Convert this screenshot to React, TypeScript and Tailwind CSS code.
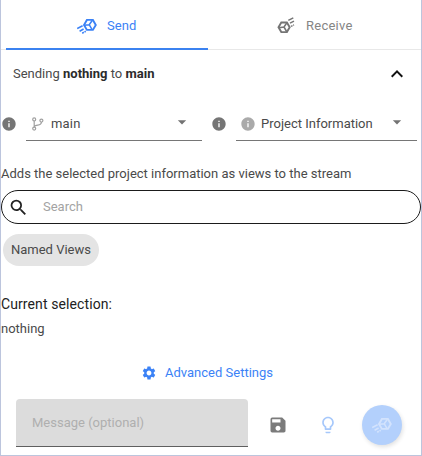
import type { ReactNode } from "react";
import {
  MdArrowDropDown,
  MdInfo,
  MdKeyboardArrowUp,
  MdLightbulbOutline,
  MdSave,
  MdSearch,
  MdSettings,
} from "react-icons/md";

function SendIcon() {
  return (
    <svg width="20" height="18" viewBox="0 0 20 18" fill="none" stroke="currentColor">
      <path d="M9.9 2.9h6l2.9 5-2.9 5h-6L7 7.9z" strokeWidth="1.9" />
      <path d="M7.3 8.2l4.9-.5 3.2-4.4M12.2 7.7l2.9 5" strokeWidth="1.5" />
      <path d="M.2 11.6l5.4-2.9M2.6 14.2l4-2.2" strokeWidth="1.6" />
      <path d="M5.2 16.2l3.6-1.9" strokeWidth="1.6" strokeDasharray="1.9 .7" />
    </svg>
  );
}

function ReceiveIcon() {
  return (
    <svg width="18" height="18" viewBox="0 0 18 18" fill="none" stroke="currentColor">
      <path d="M4.3 5.5h5.6l2.8 4.8-2.8 4.8H4.3l-2.8-4.8z" strokeWidth="1.9" />
      <path d="M1.8 10.8l5.2-.8 2.9-4.2M7 10l2.9 5" strokeWidth="1.5" />
      <path d="M11.3 3.3l5-2.5M13 6.2l4-2" strokeWidth="1.5" />
      <path d="M14 9.4l3-1.5" strokeWidth="1.5" strokeDasharray="1.7 .8" />
    </svg>
  );
}

function BranchIcon() {
  return (
    <svg width="12" height="14" viewBox="0 0 12 14" fill="none" stroke="currentColor" strokeWidth="1.2">
      <circle cx="2.2" cy="2.4" r="1.5" />
      <circle cx="2.2" cy="11.6" r="1.5" />
      <circle cx="9.4" cy="3.6" r="1.5" />
      <path d="M2.2 3.9v6.2M9.4 5.1c0 2.4-1.6 2.8-3.6 3-2.2.2-3.3.6-3.6 1.8" />
    </svg>
  );
}

function Select({ className, icon, label }: { className: string; icon: ReactNode; label: string }) {
  return (
    <div className={`flex h-[34px] items-center border-b border-[#767676] ${className}`}>
      {icon}
      <span className="grow whitespace-nowrap">{label}</span>
      <MdArrowDropDown className="mr-[10px] mb-1 size-5 shrink-0 text-[#737373]" />
    </div>
  );
}

export default function App() {
  return (
    <div className="flex h-[456px] w-[422px] flex-col overflow-hidden border-x border-b border-[#bcc5dd] bg-white font-[Roboto,sans-serif] text-[13px] leading-5 text-[#4a4a4a]">
      <div className="flex h-[50px] shrink-0 border-b border-[#e8e8e8] pl-[5px] tracking-[0.1px]">
        <div className="-mb-px flex w-[202px] items-center border-b-2 border-[#3b82f0] pt-[3px] pl-[71px] text-[#3b82f6]">
          <SendIcon />
          <span className="mt-px ml-[10px]">Send</span>
        </div>
        <div className="flex items-center pt-0.5 pl-[69px] text-[#757575]">
          <ReceiveIcon />
          <span className="ml-[11px] tracking-[0.25px] text-[#858585]">Receive</span>
        </div>
      </div>

      <div className="flex h-12 shrink-0 items-center justify-between pr-3 pl-3">
        <p>
          Sending <b className="font-bold text-[#2b2b2b]">nothing</b> to{" "}
          <b className="font-bold text-[#2b2b2b]">main</b>
        </p>
        <MdKeyboardArrowUp className="size-6 text-[#111]" />
      </div>

      <div className="mt-[9px] flex h-[34px] shrink-0 items-center">
        <MdInfo className="size-4 text-[#757575]" />
        <Select
          className="ml-[9px] w-[176px] tracking-[0.2px]"
          icon={<span className="mr-[7px] ml-[6px] text-[#a0a0a0]"><BranchIcon /></span>}
          label="main"
        />
        <MdInfo className="ml-[9px] size-4 text-[#757575]" />
        <Select
          className="ml-[9px] w-[181px]"
          icon={<MdInfo className="mr-[5px] ml-1 size-4 shrink-0 text-[#aaa]" />}
          label="Project Information"
        />
      </div>

      <p className="mt-[23px] shrink-0 whitespace-nowrap">
        Adds the selected project information as views to the stream
      </p>
      <div className="mt-[6px] flex h-[34px] shrink-0 items-center rounded-full border border-[#1b1b1b] pl-[6px]">
        <MdSearch className="size-[21px] text-[#222]" />
        <span className="ml-[14px] text-[#a3a3a3]">Search</span>
      </div>
      <div className="mt-[10px] ml-0.5 flex h-8 w-24 shrink-0 items-center justify-center rounded-full bg-[#e4e4e4] whitespace-nowrap">
        Named Views
      </div>

      <p className="mt-7 shrink-0 text-sm tracking-[0.1px] text-[#222]">Current selection:</p>
      <p className="mt-[5px] shrink-0">nothing</p>

      <div className="mt-6 flex shrink-0 items-center pl-[140px] text-[#3b82f6]">
        <MdSettings className="size-4" />
        <span className="ml-2 whitespace-nowrap">Advanced Settings</span>
      </div>

      <div className="mt-4 flex h-12 shrink-0 items-center pl-[15px]">
        <div className="flex h-12 w-[232px] items-center rounded-t border-b border-[#5f5f5f] bg-[#dcdcdc] pl-4 text-[#afafaf]">
          Message (optional)
        </div>
        <MdSave className="mt-1 ml-5 size-5 text-[#7b7b7b]" />
        <MdLightbulbOutline className="mt-1 ml-[30px] size-5 text-[#a6c8fb]" />
        <div className="mt-1 ml-6 flex size-10 items-center justify-center rounded-full bg-[#b3d0fc] text-[#d3e3fd] shadow-[1px_2px_4px_rgba(0,0,0,0.12)]">
          <SendIcon />
        </div>
      </div>
    </div>
  );
}
